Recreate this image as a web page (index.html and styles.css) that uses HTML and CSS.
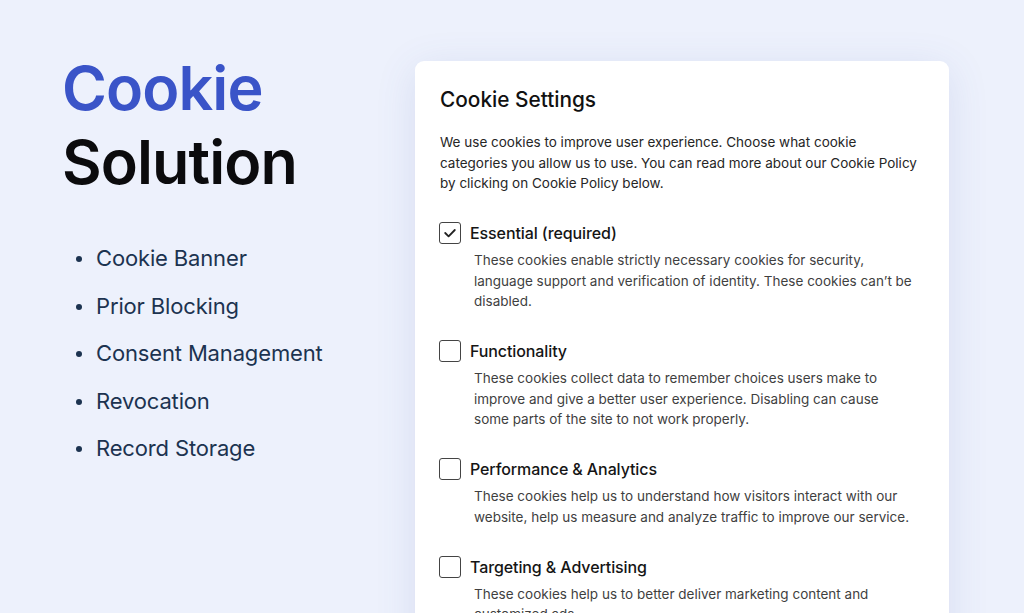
FILE: index.html
```html
<!DOCTYPE html>
<html lang="en">
<head>
<meta charset="utf-8">
<title>Cookie Solution</title>
<link rel="stylesheet" href="styles.css">
</head>
<body>
<main class="page">
  <section class="intro">
    <h1 class="headline"><span class="accent">Cookie</span><br>Solution</h1>
    <ul class="features">
      <li>Cookie Banner</li>
      <li>Prior Blocking</li>
      <li>Consent Management</li>
      <li>Revocation</li>
      <li>Record Storage</li>
    </ul>
  </section>
  <section class="card">
    <h2 class="card-title">Cookie Settings</h2>
    <p class="card-lead">We use cookies to improve user experience. Choose what cookie categories you allow us to use. You can read more about our Cookie Policy by clicking on Cookie Policy below.</p>
    <div class="option">
      <div class="option-head">
        <span class="box checked"><svg viewBox="0 0 22 22" width="22" height="22"><polyline points="6.2,11 9.6,14.4 15.8,8" fill="none" stroke="#222" stroke-width="1.8" stroke-linecap="round" stroke-linejoin="round"/></svg></span>
        <span class="option-label">Essential (required)</span>
      </div>
      <p class="option-desc">These cookies enable strictly necessary cookies for security, language support and verification of identity. These cookies can’t be disabled.</p>
    </div>
    <div class="option">
      <div class="option-head">
        <span class="box"></span>
        <span class="option-label">Functionality</span>
      </div>
      <p class="option-desc">These cookies collect data to remember choices users make to improve and give a better user experience. Disabling can cause some parts of the site to not work properly.</p>
    </div>
    <div class="option">
      <div class="option-head">
        <span class="box"></span>
        <span class="option-label">Performance &amp; Analytics</span>
      </div>
      <p class="option-desc">These cookies help us to understand how visitors interact with our website, help us measure and analyze traffic to improve our service.</p>
    </div>
    <div class="option">
      <div class="option-head">
        <span class="box"></span>
        <span class="option-label">Targeting &amp; Advertising</span>
      </div>
      <p class="option-desc">These cookies help us to better deliver marketing content and customized ads.</p>
    </div>
  </section>
</main>
</body>
</html>
```
FILE: styles.css
```css
* { box-sizing: border-box; }
html, body {
  margin: 0;
  padding: 0;
  height: 100%;
  overflow: hidden;
  background: #edf1fc;
  font-family: Inter, "Noto Sans", sans-serif;
}
.page {
  display: flex;
  align-items: flex-start;
}
.intro {
  width: 415px;
  padding: 51px 0 0 62px;
  flex: none;
}
.headline {
  margin: 0;
  font-size: 61px;
  line-height: 74px;
  font-weight: 600;
  color: #0b0b0d;
  letter-spacing: -0.9px;
}
.accent { color: #3a54c8; }
.features {
  list-style: none;
  margin: 36px 0 0 2px;
  padding: 0;
}
.features li {
  position: relative;
  padding-left: 32px;
  font-size: 22px;
  line-height: 47.5px;
  color: #1c3350;
  letter-spacing: -0.15px;
}
.features li::before {
  content: "";
  position: absolute;
  left: 12px;
  top: 21px;
  width: 6px;
  height: 6px;
  border-radius: 50%;
  background: #1c3350;
}
.card {
  margin-top: 61px;
  width: 534px;
  min-height: 700px;
  flex: none;
  background: #fff;
  border-radius: 9px;
  padding: 25px 25px;
  box-shadow: 0 8px 40px rgba(70, 90, 170, 0.13);
}
.card-title {
  margin: 0;
  font-size: 20.8px;
  line-height: 28px;
  font-weight: 500;
  color: #111;
}
.card-lead {
  margin: 18px 0 0;
  font-size: 13.5px;
  line-height: 20.5px;
  color: #262626;
}
.option { margin-top: 28.5px; }
.option-head {
  display: flex;
  align-items: center;
  gap: 9px;
}
.box {
  width: 22px;
  height: 22px;
  flex: none;
  margin-left: -1px;
  border: 1.5px solid #444;
  border-radius: 3px;
  display: flex;
  align-items: center;
  justify-content: center;
}
.box svg { display: block; margin: -1.5px; }
.option-label {
  font-size: 16px;
  line-height: 22px;
  font-weight: 500;
  color: #151515;
  letter-spacing: -0.1px;
}
.option-desc {
  margin: 6px 10px 0 34px;
  font-size: 13.5px;
  line-height: 20.5px;
  color: #3f3f3f;
}
```
